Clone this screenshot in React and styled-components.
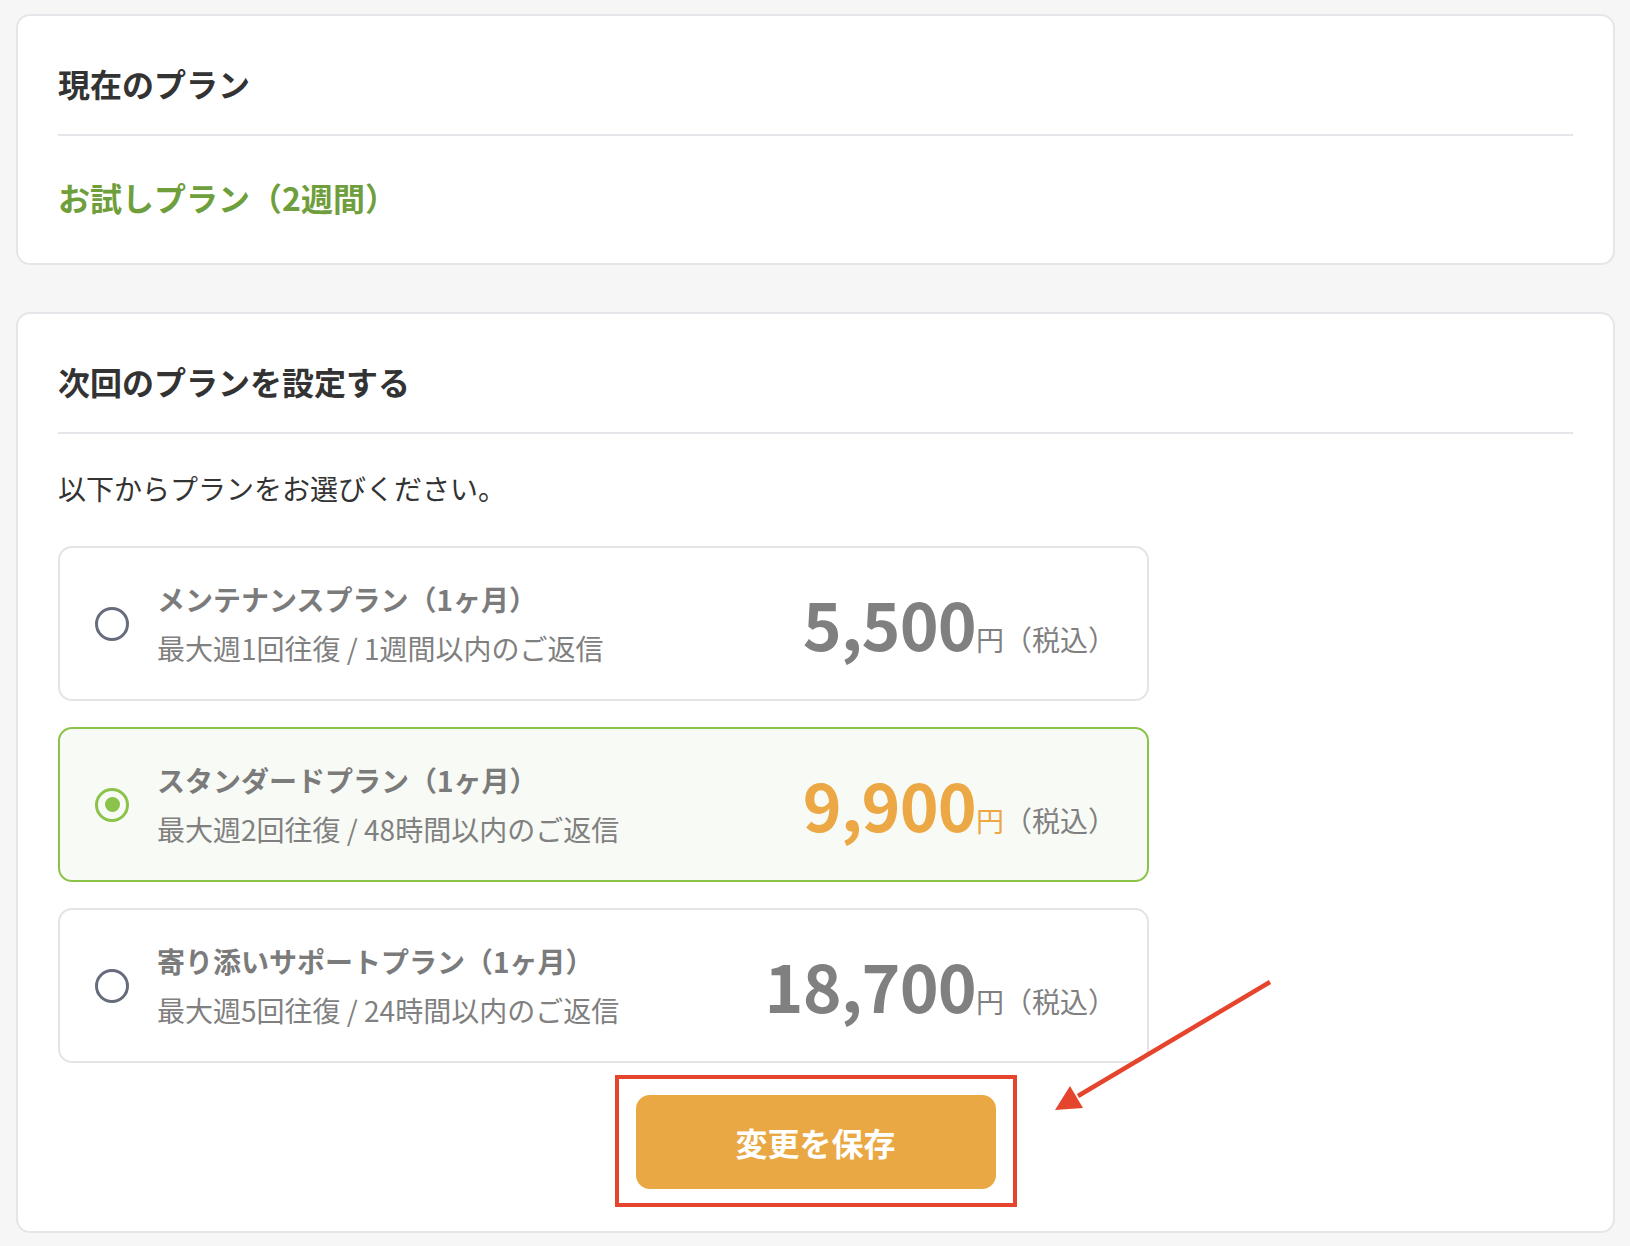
import React, { useState } from "react";
import styled, { createGlobalStyle } from "styled-components";

const GlobalStyle = createGlobalStyle`
  html, body {
    margin: 0;
    padding: 0;
    background: #f6f6f6;
  }
  body {
    font-family: "Noto Sans CJK JP", "Noto Sans", sans-serif;
    color: #333;
  }
  * { box-sizing: border-box; }
`;

const Page = styled.div`
  position: relative;
  min-height: 1246px;
  padding: 14px 15px 15px 16px;
  display: flex;
  flex-direction: column;
  gap: 47px;
`;

const Card = styled.section`
  background: #fff;
  border: 2px solid #e6e6ea;
  border-radius: 14px;
  padding: 43px 40px 42px;
  display: flex;
  flex-direction: column;
`;

const CardTitle = styled.h2`
  margin: 0;
  font-size: 32px;
  line-height: 48px;
  font-weight: 700;
  color: #333;
  padding-bottom: 27px;
  border-bottom: 2px solid #e6e6ea;
`;

const CurrentPlan = styled.p`
  margin: 37px 0 0;
  font-size: 32px;
  line-height: 48px;
  font-weight: 700;
  color: #6f9f3c;
`;

const Intro = styled.p`
  margin: 33px 0 0;
  font-size: 28px;
  line-height: 42px;
  color: #333;
`;

const PlanList = styled.div`
  margin-top: 37px;
  width: 1091px;
  display: flex;
  flex-direction: column;
  gap: 26px;
`;

const PlanBox = styled.label`
  display: flex;
  align-items: center;
  min-height: 155px;
  padding: 0 31px 0 35px;
  border: 2px solid ${(p) => (p.$selected ? "#8bc34a" : "#e4e4e7")};
  background: ${(p) => (p.$selected ? "#f8faf5" : "#fff")};
  border-radius: 14px;
  cursor: pointer;
`;

const Radio = styled.span`
  flex: none;
  width: 34px;
  height: 34px;
  border-radius: 50%;
  border: 3.5px solid ${(p) => (p.$selected ? "#8bc34a" : "#676c7c")};
  display: flex;
  align-items: center;
  justify-content: center;
  &::after {
    content: "";
    width: 15px;
    height: 15px;
    border-radius: 50%;
    background: #8bc34a;
    display: ${(p) => (p.$selected ? "block" : "none")};
  }
`;

const PlanText = styled.div`
  margin-left: 28px;
  display: flex;
  flex-direction: column;
  gap: 5px;
  flex: 1;
`;

const PlanName = styled.div`
  font-size: 28px;
  line-height: 44px;
  font-weight: 700;
  color: #7b7b7b;
`;

const PlanDesc = styled.div`
  font-size: 28px;
  line-height: 44px;
  font-weight: 400;
  color: #808080;
`;

const Price = styled.div`
  display: flex;
  align-items: baseline;
  color: ${(p) => (p.$selected ? "#eba844" : "#808080")};
`;

const Amount = styled.span`
  font-size: 66px;
  line-height: 1;
  font-weight: 700;
  letter-spacing: -0.8px;
`;

const Yen = styled.span`
  font-size: 28px;
  font-weight: 400;
`;

const Tax = styled.span`
  font-size: 28px;
  font-weight: 400;
  color: #808080;
`;

const ButtonRow = styled.div`
  display: flex;
  justify-content: center;
  margin-top: 32px;
`;

const Highlight = styled.div`
  position: relative;
  &::after {
    content: "";
    position: absolute;
    inset: -20px -21px -18px -21px;
    border: 4px solid #e6452d;
    pointer-events: none;
  }
`;

const SaveButton = styled.button`
  width: 360px;
  height: 94px;
  border: none;
  border-radius: 14px;
  background: #e9a843;
  color: #fff;
  font-family: "Noto Sans CJK JP", "Noto Sans", sans-serif;
  font-size: 32px;
  font-weight: 700;
  cursor: pointer;
`;

const Arrow = styled.svg`
  position: absolute;
  left: 1040px;
  top: 960px;
  width: 250px;
  height: 170px;
  pointer-events: none;
`;

const plans = [
  { id: "m", name: "メンテナンスプラン（1ヶ月）", desc: "最大週1回往復 / 1週間以内のご返信", price: "5,500" },
  { id: "s", name: "スタンダードプラン（1ヶ月）", desc: "最大週2回往復 / 48時間以内のご返信", price: "9,900" },
  { id: "y", name: "寄り添いサポートプラン（1ヶ月）", desc: "最大週5回往復 / 24時間以内のご返信", price: "18,700" },
];

export default function App() {
  const [selected, setSelected] = useState("s");
  return (
    <>
      <GlobalStyle />
      <Page>
        <Card>
          <CardTitle>現在のプラン</CardTitle>
          <CurrentPlan>お試しプラン（2週間）</CurrentPlan>
        </Card>
        <Card>
          <CardTitle>次回のプランを設定する</CardTitle>
          <Intro>以下からプランをお選びください。</Intro>
          <PlanList>
            {plans.map((p) => {
              const sel = p.id === selected;
              return (
                <PlanBox key={p.id} $selected={sel} onClick={() => setSelected(p.id)}>
                  <Radio $selected={sel} />
                  <PlanText>
                    <PlanName>{p.name}</PlanName>
                    <PlanDesc>{p.desc}</PlanDesc>
                  </PlanText>
                  <Price $selected={sel}>
                    <Amount>{p.price}</Amount>
                    <Yen>円</Yen>
                    <Tax>（税込）</Tax>
                  </Price>
                </PlanBox>
              );
            })}
          </PlanList>
          <ButtonRow>
            <Highlight>
              <SaveButton type="button">変更を保存</SaveButton>
            </Highlight>
          </ButtonRow>
        </Card>
        <Arrow viewBox="0 0 250 170">
          <line x1="230" y1="22" x2="38" y2="136" stroke="#e6452d" strokeWidth="4.5" />
          <polygon points="15,150 43,148 30,126" fill="#e6452d" />
        </Arrow>
      </Page>
    </>
  );
}
